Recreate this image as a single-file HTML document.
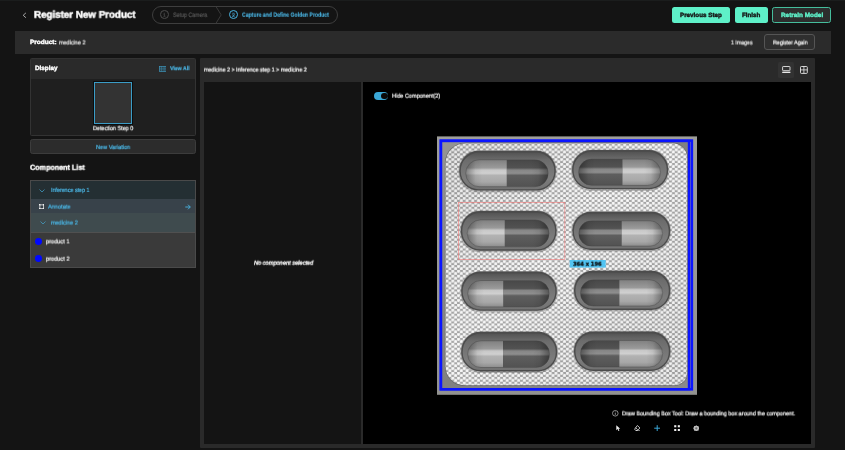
<!DOCTYPE html>
<html lang="en"><head><meta charset="utf-8"><title>Register New Product</title>
<style>
html,body{margin:0;padding:0;background:#141414;}
#app{position:relative;width:845px;height:450px;overflow:hidden;background:#141414;font-family:"Liberation Sans",sans-serif;}
#app div,#app svg,#app span{position:absolute;box-sizing:border-box;}
.t{white-space:nowrap;line-height:1;transform-origin:0 0;display:block;}
.t{text-rendering:geometricPrecision;will-change:transform;}
.t{-webkit-text-stroke:0.22px currentColor;}

</style></head>
<body>
<div id="app">
<!-- header -->
<div style="left:0;top:0;width:845px;height:1px;background:#1b1d1d;"></div>
<svg style="left:22px;top:12px" width="5" height="7" viewBox="0 0 5 7"><path d="M3.9 0.9 L1.2 3.3 L3.9 5.7" fill="none" stroke="#b8b8b8" stroke-width="0.9"/></svg>
<div style="left:152px;top:6px;width:186px;height:17.7px;border:1px solid #3e3e3e;border-radius:9px;"></div>
<svg style="left:214px;top:6px" width="10" height="18" viewBox="0 0 10 18"><path d="M2 0.6 L7.2 8.9 L2 17.2" fill="none" stroke="#3e3e3e" stroke-width="0.9"/></svg>
<div style="left:160.2px;top:10.3px;width:8.8px;height:8.8px;border:0.8px solid #4c4c4c;border-radius:50%;"></div>
<div style="left:229.1px;top:10.2px;width:9px;height:9px;border:0.9px solid #4ab4e2;border-radius:50%;"></div>
<div style="left:672.4px;top:7.3px;width:57.2px;height:15.4px;background:#5ef0c8;border-radius:2.5px;"></div>
<div style="left:734.6px;top:7.3px;width:33.3px;height:15.4px;background:#5ef0c8;border-radius:2.5px;"></div>
<div style="left:772.1px;top:7.2px;width:59px;height:15.6px;background:#2d2d2d;border:0.9px solid #45bd9c;border-radius:2.5px;"></div>
<!-- product bar -->
<div style="left:15px;top:31px;width:816px;height:23px;background:#2b2b2b;"></div>
<div style="left:764.4px;top:34.2px;width:50.8px;height:16.3px;background:#2f2f2f;border:1px solid #555;border-radius:3px;"></div>
<!-- display card -->
<div style="left:30.3px;top:58.2px;width:165.6px;height:77.7px;background:#1f1f1f;border:1px solid #333;border-radius:1.5px;"></div>
<div style="left:31.3px;top:59.2px;width:163.6px;height:19.6px;background:#2a2a2a;"></div>
<svg style="left:158.6px;top:66px" width="7.6" height="5.8" viewBox="0 0 7.6 5.8"><rect x="0.4" y="0.4" width="6.8" height="5" fill="#2f5f75" fill-opacity="0.45" stroke="#3f97bd" stroke-width="0.7"/><path d="M2.5 0.4V5.4M5.1 0.4V5.4M0.4 2.9H7.2" stroke="#3f97bd" stroke-width="0.5" opacity="0.8"/></svg>
<div style="left:92.7px;top:81px;width:40.6px;height:43.5px;background:#0c0c0c;"></div>
<div style="left:93.8px;top:82px;width:38.6px;height:41.7px;background:#333;border:1px solid #3b9cc6;"></div>
<div style="left:30.3px;top:139.3px;width:165.6px;height:15.2px;background:#2c2c2c;border:1px solid #3c3c3c;border-radius:2.5px;"></div>
<!-- component list -->
<div style="left:30.2px;top:180px;width:165.9px;height:87.8px;background:#3a3a3a;border:1px solid #4a4a4a;border-left-width:1.4px;"></div>
<div style="left:31.3px;top:181px;width:163.8px;height:17.8px;background:#242f33;"></div>
<div style="left:31.3px;top:198.8px;width:163.8px;height:14.4px;background:#38424a;"></div>
<div style="left:31.3px;top:213.2px;width:163.8px;height:19.7px;background:#3f4b4e;border-bottom:0.6px solid #505050;"></div>
<svg style="left:38.8px;top:188.6px" width="6" height="4" viewBox="0 0 6 4"><path d="M0.5 0.5 L3 3 L5.5 0.5" fill="none" stroke="#44a6d0" stroke-width="0.7"/></svg>
<svg style="left:39.6px;top:221.4px" width="6" height="4" viewBox="0 0 6 4"><path d="M0.5 0.5 L3 3 L5.5 0.5" fill="none" stroke="#44a6d0" stroke-width="0.7"/></svg>
<svg style="left:39px;top:203.7px" width="5.3" height="5.3" viewBox="0 0 6 6"><rect x="1" y="1" width="4" height="4" fill="none" stroke="#f0f0f0" stroke-width="0.8"/><rect x="0" y="0" width="1.6" height="1.6" fill="#f0f0f0"/><rect x="4.4" y="0" width="1.6" height="1.6" fill="#f0f0f0"/><rect x="0" y="4.4" width="1.6" height="1.6" fill="#f0f0f0"/><rect x="4.4" y="4.4" width="1.6" height="1.6" fill="#f0f0f0"/></svg>
<svg style="left:185px;top:203.6px" width="6" height="6" viewBox="0 0 6 6"><path d="M0.3 3H5.2M3 0.7L5.3 3L3 5.3" fill="none" stroke="#4ab4e2" stroke-width="0.9"/></svg>
<div style="left:35.4px;top:238.1px;width:6.9px;height:6.9px;border-radius:50%;background:#0008ff;"></div>
<div style="left:35.4px;top:255.2px;width:6.9px;height:6.9px;border-radius:50%;background:#0008ff;"></div>
<!-- right panel -->
<div style="left:200px;top:58px;width:615px;height:390px;background:#2a2a2a;border-radius:1px;"></div>
<div style="left:203.8px;top:81.7px;width:157.5px;height:362px;background:#141414;"></div>
<div style="left:363px;top:81.7px;width:448.2px;height:362.2px;background:#000;"></div>
<div style="left:778.1px;top:62px;width:15.9px;height:15.6px;background:#323232;border-radius:1.5px;"></div>
<svg style="left:782px;top:66.4px" width="9" height="7.4" viewBox="0 0 9 7.4"><rect x="0.6" y="0.5" width="7.4" height="4.2" rx="0.6" fill="none" stroke="#e8e8e8" stroke-width="0.9"/><rect x="0.2" y="5.7" width="8.2" height="1.3" fill="#e8e8e8"/></svg>
<svg style="left:799.8px;top:66.1px" width="8" height="8" viewBox="0 0 8 8"><rect x="0.5" y="0.5" width="6.8" height="6.9" rx="0.8" fill="none" stroke="#e8e8e8" stroke-width="0.9"/><path d="M3.9 0.5V7.4M0.5 3.9H7.3" stroke="#e8e8e8" stroke-width="0.8"/></svg>
<!-- toggle -->
<div style="left:373.8px;top:91.6px;width:14.6px;height:8.2px;border-radius:4.1px;background:#3aa7d6;"></div>
<div style="left:381.4px;top:92.6px;width:6.2px;height:6.2px;border-radius:50%;background:#0a0a0a;"></div>
<svg style="left:437px;top:136px" width="260" height="259" viewBox="437 136 260 259">
<defs>
<radialGradient id="dot"><stop offset="0" stop-color="#ffffff"/><stop offset="0.6" stop-color="#f0f0f0"/><stop offset="1" stop-color="#b6b6b6"/></radialGradient>
<pattern id="foil" x="445.6" y="143.6" width="5.73" height="4.86" patternUnits="userSpaceOnUse">
<rect width="5.73" height="4.86" fill="#a0a0a0"/><circle cx="1.43" cy="1.21" r="2.05" fill="url(#dot)"/><circle cx="4.3" cy="3.64" r="2.05" fill="url(#dot)"/></pattern>
<linearGradient id="cavg" x1="0" y1="0" x2="0" y2="1"><stop offset="0" stop-color="#545454"/><stop offset="0.2" stop-color="#6c6c6c"/><stop offset="0.7" stop-color="#7c7c7c"/><stop offset="1" stop-color="#727272"/></linearGradient>
<linearGradient id="capL" x1="0" y1="0" x2="0" y2="1"><stop offset="0" stop-color="#808080"/><stop offset="0.3" stop-color="#9a9a9a"/><stop offset="0.38" stop-color="#c8c8c8"/><stop offset="0.5" stop-color="#d0d0d0"/><stop offset="0.58" stop-color="#b2b2b2"/><stop offset="0.82" stop-color="#a8a8a8"/><stop offset="1" stop-color="#8c8c8c"/></linearGradient>
<linearGradient id="capD" x1="0" y1="0" x2="0" y2="1"><stop offset="0" stop-color="#484848"/><stop offset="0.3" stop-color="#525252"/><stop offset="0.38" stop-color="#868686"/><stop offset="0.5" stop-color="#8e8e8e"/><stop offset="0.58" stop-color="#5e5e5e"/><stop offset="1" stop-color="#525252"/></linearGradient>
<linearGradient id="ends" x1="0" y1="0" x2="1" y2="0"><stop offset="0" stop-color="#000" stop-opacity="0.38"/><stop offset="0.12" stop-color="#000" stop-opacity="0.06"/><stop offset="0.2" stop-color="#000" stop-opacity="0"/><stop offset="0.8" stop-color="#000" stop-opacity="0"/><stop offset="0.88" stop-color="#000" stop-opacity="0.06"/><stop offset="1" stop-color="#000" stop-opacity="0.38"/></linearGradient>
<linearGradient id="bgg" x1="0" y1="0" x2="1" y2="1"><stop offset="0" stop-color="#949494"/><stop offset="0.5" stop-color="#808080"/><stop offset="1" stop-color="#8a8a8a"/></linearGradient>
<linearGradient id="shade" x1="0" y1="0" x2="1" y2="1"><stop offset="0" stop-color="#000" stop-opacity="0.07"/><stop offset="0.45" stop-color="#fff" stop-opacity="0.06"/><stop offset="1" stop-color="#000" stop-opacity="0.04"/></linearGradient>
<linearGradient id="frm" x1="0" y1="0" x2="0" y2="1"><stop offset="0" stop-color="#9e9e9a"/><stop offset="1" stop-color="#929290"/></linearGradient>
</defs>
<rect x="437.0" y="136.4" width="260.0" height="258.4" fill="url(#frm)"/>
<rect x="441" y="141" width="248" height="248" fill="url(#bgg)"/>
<path d="M465.4 142.6 H672.2 A15.5 15.5 0 0 1 687.7 158.1 V372.9 A13.0 13.0 0 0 1 674.7 385.9 H464.4 A19.5 19.5 0 0 1 444.9 366.4 V163.1 A20.5 20.5 0 0 1 465.4 142.6 Z" fill="#5e5e5e" opacity="0.8"/>
<path d="M465.5 143.2 H672.2 A15.0 15.0 0 0 1 687.2 158.2 V372.7 A12.5 12.5 0 0 1 674.7 385.2 H464.5 A19.0 19.0 0 0 1 445.5 366.2 V163.2 A20.0 20.0 0 0 1 465.5 143.2 Z" fill="url(#foil)"/>
<path d="M465.5 143.2 H672.2 A15.0 15.0 0 0 1 687.2 158.2 V372.7 A12.5 12.5 0 0 1 674.7 385.2 H464.5 A19.0 19.0 0 0 1 445.5 366.2 V163.2 A20.0 20.0 0 0 1 465.5 143.2 Z" fill="url(#shade)"/>
<rect x="458.3" y="150.2" width="98.5" height="42.0" rx="20.3" fill="#6c6c6c" opacity="0.4"/>
<rect x="459.3" y="150.8" width="96.5" height="39.8" rx="19.3" fill="#4c4c4c"/>
<rect x="460.8" y="152.8" width="93.5" height="36.4" rx="17.7" fill="url(#cavg)"/>
<clipPath id="cp0"><rect x="465.7" y="159.8" width="82.5" height="26.9" rx="13.4"/></clipPath>
<g clip-path="url(#cp0)">
<rect x="465.7" y="159.8" width="41.1" height="26.9" fill="url(#capL)"/>
<rect x="506.8" y="159.8" width="41.4" height="26.9" fill="url(#capD)"/>
<rect x="465.7" y="159.8" width="82.5" height="26.9" fill="url(#ends)"/>
</g>
<rect x="465.7" y="159.8" width="82.5" height="26.9" rx="13.4" fill="none" stroke="#404040" stroke-width="0.8" opacity="0.5"/>
<rect x="459.8" y="210.3" width="97.8" height="42.0" rx="20.3" fill="#6c6c6c" opacity="0.4"/>
<rect x="460.8" y="210.9" width="95.8" height="39.8" rx="19.3" fill="#4c4c4c"/>
<rect x="462.3" y="212.9" width="92.8" height="36.4" rx="17.7" fill="url(#cavg)"/>
<clipPath id="cp1"><rect x="467.2" y="219.9" width="81.8" height="26.9" rx="13.4"/></clipPath>
<g clip-path="url(#cp1)">
<rect x="467.2" y="219.9" width="37.6" height="26.9" fill="url(#capL)"/>
<rect x="504.8" y="219.9" width="44.2" height="26.9" fill="url(#capD)"/>
<rect x="467.2" y="219.9" width="81.8" height="26.9" fill="url(#ends)"/>
</g>
<rect x="467.2" y="219.9" width="81.8" height="26.9" rx="13.4" fill="none" stroke="#404040" stroke-width="0.8" opacity="0.5"/>
<rect x="460.2" y="270.9" width="97.6" height="41.5" rx="20.1" fill="#6c6c6c" opacity="0.4"/>
<rect x="461.2" y="271.5" width="95.6" height="39.3" rx="19.1" fill="#4c4c4c"/>
<rect x="462.7" y="273.5" width="92.6" height="35.9" rx="17.5" fill="url(#cavg)"/>
<clipPath id="cp2"><rect x="467.6" y="280.5" width="81.6" height="26.4" rx="13.2"/></clipPath>
<g clip-path="url(#cp2)">
<rect x="467.6" y="280.5" width="35.7" height="26.4" fill="url(#capL)"/>
<rect x="503.3" y="280.5" width="45.9" height="26.4" fill="url(#capD)"/>
<rect x="467.6" y="280.5" width="81.6" height="26.4" fill="url(#ends)"/>
</g>
<rect x="467.6" y="280.5" width="81.6" height="26.4" rx="13.2" fill="none" stroke="#404040" stroke-width="0.8" opacity="0.5"/>
<rect x="460.2" y="331.2" width="98.0" height="41.8" rx="20.2" fill="#6c6c6c" opacity="0.4"/>
<rect x="461.2" y="331.8" width="96.0" height="39.6" rx="19.2" fill="#4c4c4c"/>
<rect x="462.7" y="333.8" width="93.0" height="36.2" rx="17.6" fill="url(#cavg)"/>
<clipPath id="cp3"><rect x="467.6" y="340.8" width="82.0" height="26.7" rx="13.3"/></clipPath>
<g clip-path="url(#cp3)">
<rect x="467.6" y="340.8" width="35.4" height="26.7" fill="url(#capL)"/>
<rect x="503.0" y="340.8" width="46.6" height="26.7" fill="url(#capD)"/>
<rect x="467.6" y="340.8" width="82.0" height="26.7" fill="url(#ends)"/>
</g>
<rect x="467.6" y="340.8" width="82.0" height="26.7" rx="13.3" fill="none" stroke="#404040" stroke-width="0.8" opacity="0.5"/>
<rect x="571.1" y="149.5" width="98.1" height="41.4" rx="20.0" fill="#6c6c6c" opacity="0.4"/>
<rect x="572.1" y="150.1" width="96.1" height="39.2" rx="19.0" fill="#4c4c4c"/>
<rect x="573.6" y="152.1" width="93.1" height="35.8" rx="17.4" fill="url(#cavg)"/>
<clipPath id="cp4"><rect x="578.5" y="159.1" width="82.1" height="26.3" rx="13.2"/></clipPath>
<g clip-path="url(#cp4)">
<rect x="578.5" y="159.1" width="44.1" height="26.3" fill="url(#capD)"/>
<rect x="622.6" y="159.1" width="38.0" height="26.3" fill="url(#capL)"/>
<rect x="578.5" y="159.1" width="82.1" height="26.3" fill="url(#ends)"/>
</g>
<rect x="578.5" y="159.1" width="82.1" height="26.3" rx="13.2" fill="none" stroke="#404040" stroke-width="0.8" opacity="0.5"/>
<rect x="571.4" y="211.2" width="99.8" height="40.4" rx="19.5" fill="#6c6c6c" opacity="0.4"/>
<rect x="572.4" y="211.8" width="97.8" height="38.2" rx="18.5" fill="#4c4c4c"/>
<rect x="573.9" y="213.8" width="94.8" height="34.8" rx="16.9" fill="url(#cavg)"/>
<clipPath id="cp5"><rect x="578.8" y="220.8" width="83.8" height="25.3" rx="12.6"/></clipPath>
<g clip-path="url(#cp5)">
<rect x="578.8" y="220.8" width="43.0" height="25.3" fill="url(#capD)"/>
<rect x="621.8" y="220.8" width="40.8" height="25.3" fill="url(#capL)"/>
<rect x="578.8" y="220.8" width="83.8" height="25.3" fill="url(#ends)"/>
</g>
<rect x="578.8" y="220.8" width="83.8" height="25.3" rx="12.6" fill="none" stroke="#404040" stroke-width="0.8" opacity="0.5"/>
<rect x="573.0" y="270.2" width="98.3" height="41.3" rx="20.0" fill="#6c6c6c" opacity="0.4"/>
<rect x="574.0" y="270.8" width="96.3" height="39.1" rx="19.0" fill="#4c4c4c"/>
<rect x="575.5" y="272.8" width="93.3" height="35.7" rx="17.4" fill="url(#cavg)"/>
<clipPath id="cp6"><rect x="580.4" y="279.8" width="82.3" height="26.2" rx="13.1"/></clipPath>
<g clip-path="url(#cp6)">
<rect x="580.4" y="279.8" width="39.1" height="26.2" fill="url(#capD)"/>
<rect x="619.5" y="279.8" width="43.2" height="26.2" fill="url(#capL)"/>
<rect x="580.4" y="279.8" width="82.3" height="26.2" fill="url(#ends)"/>
</g>
<rect x="580.4" y="279.8" width="82.3" height="26.2" rx="13.1" fill="none" stroke="#404040" stroke-width="0.8" opacity="0.5"/>
<rect x="573.0" y="330.8" width="98.3" height="41.7" rx="20.2" fill="#6c6c6c" opacity="0.4"/>
<rect x="574.0" y="331.4" width="96.3" height="39.5" rx="19.2" fill="#4c4c4c"/>
<rect x="575.5" y="333.4" width="93.3" height="36.1" rx="17.6" fill="url(#cavg)"/>
<clipPath id="cp7"><rect x="580.4" y="340.4" width="82.3" height="26.6" rx="13.3"/></clipPath>
<g clip-path="url(#cp7)">
<rect x="580.4" y="340.4" width="39.1" height="26.6" fill="url(#capD)"/>
<rect x="619.5" y="340.4" width="43.2" height="26.6" fill="url(#capL)"/>
<rect x="580.4" y="340.4" width="82.3" height="26.6" fill="url(#ends)"/>
</g>
<rect x="580.4" y="340.4" width="82.3" height="26.6" rx="13.3" fill="none" stroke="#404040" stroke-width="0.8" opacity="0.5"/>
<rect x="440.75" y="140.6" width="251.1" height="248.7" fill="none" stroke="#0a14ff" stroke-width="2.6"/>
<rect x="441.0" y="141.0" width="248.0" height="248.2" fill="none" stroke="#0a14ff" stroke-width="2.4"/>
<rect x="458.4" y="202.5" width="106.4" height="57" fill="none" stroke="#f47878" stroke-width="0.75" opacity="0.8"/>
<rect x="569.7" y="260" width="36" height="7.6" fill="#52c4f2"/>
</svg>
<!-- bottom tools -->
<svg style="left:612.4px;top:410.2px" width="6.6" height="6.6" viewBox="0 0 6.6 6.6"><circle cx="3.3" cy="3.3" r="2.8" fill="none" stroke="#e0e0e0" stroke-width="0.6"/><path d="M3.3 2.9V4.9" stroke="#e0e0e0" stroke-width="0.6"/><circle cx="3.3" cy="1.9" r="0.38" fill="#e0e0e0"/></svg>
<svg style="left:615.6px;top:425px" width="5" height="6.4" viewBox="0 0 5 6.4"><path d="M0.3 0.2 L0.3 5.2 L1.6 4.1 L2.5 6.1 L3.4 5.7 L2.5 3.8 L4.2 3.7 Z" fill="#f0f0f0"/></svg>
<svg style="left:634.4px;top:424.8px" width="6.4" height="6.4" viewBox="0 0 6.4 6.4"><path d="M3.4 0.5 L5.9 3 L3.4 5.5 L1.8 5.5 L0.6 4.2 Z M1.6 2.7 L3.7 4.8 M1.8 5.9 H6" fill="none" stroke="#f0f0f0" stroke-width="0.8"/></svg>
<svg style="left:653.9px;top:424.8px" width="6.4" height="6.4" viewBox="0 0 6.4 6.4"><path d="M3.2 0.2V6.2M0.2 3.2H6.2" stroke="#3aa7d6" stroke-width="1"/></svg>
<svg style="left:673.8px;top:424.9px" width="6.2" height="6.4" viewBox="0 0 6.2 6.4"><rect x="0.2" y="0.2" width="2.1" height="2.1" fill="#f0f0f0"/><rect x="3.8" y="0.2" width="2.1" height="2.1" fill="#f0f0f0"/><rect x="0.2" y="4" width="2.1" height="2.1" fill="#f0f0f0"/><rect x="3.8" y="4" width="2.1" height="2.1" fill="#f0f0f0"/></svg>
<svg style="left:692.8px;top:424.8px" width="6.6" height="6.6" viewBox="0 0 6.6 6.6"><path d="M3.3 0.2 L4.2 0.9 L5.4 0.9 L5.7 2 L6.4 3.3 L5.7 4.6 L5.4 5.7 L4.2 5.7 L3.3 6.4 L2.4 5.7 L1.2 5.7 L0.9 4.6 L0.2 3.3 L0.9 2 L1.2 0.9 L2.4 0.9 Z" fill="#bdbdbd"/><circle cx="3.3" cy="3.3" r="1.15" fill="#6a6a6a"/></svg>

<!-- text labels -->
<span class="t" id="t0" style="left:34.20px;top:10.0px;font-size:10.00px;font-weight:700;color:#ffffff;-webkit-text-stroke:0.5px currentColor;transform:translateY(0.80px) scaleX(0.9777)">Register New Product</span>
<span class="t" id="t1" style="left:173.40px;top:12.0px;font-size:6.30px;font-weight:400;color:#545454;transform:translateY(0.90px) scaleX(0.8446)">Setup Camera</span>
<span class="t" id="t2" style="left:241.90px;top:12.0px;font-size:6.50px;font-weight:700;color:#4ab4e2;-webkit-text-stroke:0.12px currentColor;transform:translateY(0.80px) scaleX(0.7880)">Capture and Define Golden Product</span>
<span class="t" id="t3" style="left:680.30px;top:13.0px;font-size:6.10px;font-weight:700;color:#151515;-webkit-text-stroke:0.38px currentColor;transform:translateY(0.00px) scaleX(1.0285)">Previous Step</span>
<span class="t" id="t4" style="left:742.10px;top:13.0px;font-size:6.10px;font-weight:700;color:#151515;-webkit-text-stroke:0.38px currentColor;transform:translateY(0.00px) scaleX(1.0193)">Finish</span>
<span class="t" id="t5" style="left:780.70px;top:13.0px;font-size:6.10px;font-weight:700;color:#5ef0c8;-webkit-text-stroke:0.38px currentColor;transform:translateY(0.00px) scaleX(1.0472)">Retrain Model</span>
<span class="t" id="t6" style="left:30.00px;top:40.0px;font-size:6.10px;font-weight:700;color:#ffffff;-webkit-text-stroke:0.38px currentColor;transform:translateY(0.40px) scaleX(1.0653)">Product:</span>
<span class="t" id="t7" style="left:59.00px;top:40.0px;font-size:6.00px;font-weight:400;color:#e4e4e4;transform:translateY(0.50px) scaleX(0.9099)">medicine 2</span>
<span class="t" id="t8" style="left:731.20px;top:40.0px;font-size:6.00px;font-weight:400;color:#e4e4e4;transform:translateY(0.50px) scaleX(0.8709)">1 Images</span>
<span class="t" id="t9" style="left:772.70px;top:40.0px;font-size:6.00px;font-weight:400;color:#f0f0f0;transform:translateY(0.50px) scaleX(0.8865)">Register Again</span>
<span class="t" id="t10" style="left:35.00px;top:66.0px;font-size:6.10px;font-weight:700;color:#ffffff;-webkit-text-stroke:0.38px currentColor;transform:translateY(0.30px) scaleX(1.0329)">Display</span>
<span class="t" id="t11" style="left:170.00px;top:67.0px;font-size:5.80px;font-weight:700;color:#4ab4e2;transform:translateY(0.20px) scaleX(0.8895)">View All</span>
<span class="t" id="t12" style="left:93.00px;top:126.0px;font-size:6.00px;font-weight:400;color:#f0f0f0;transform:translateY(0.20px) scaleX(0.9082)">Detection Step 0</span>
<span class="t" id="t13" style="left:95.90px;top:145.0px;font-size:6.00px;font-weight:400;color:#4ab4e2;transform:translateY(0.10px) scaleX(0.9267)">New Variation</span>
<span class="t" id="t14" style="left:30.30px;top:163.0px;font-size:7.40px;font-weight:700;color:#ffffff;-webkit-text-stroke:0.38px currentColor;transform:translateY(0.80px) scaleX(0.9724)">Component List</span>
<span class="t" id="t15" style="left:50.60px;top:188.0px;font-size:6.00px;font-weight:400;color:#4ab4e2;transform:translateY(0.00px) scaleX(0.8924)">Inference step 1</span>
<span class="t" id="t16" style="left:48.30px;top:204.0px;font-size:6.00px;font-weight:400;color:#4ab4e2;transform:translateY(0.60px) scaleX(0.9321)">Annotate</span>
<span class="t" id="t17" style="left:51.00px;top:220.0px;font-size:6.00px;font-weight:400;color:#4ab4e2;transform:translateY(0.60px) scaleX(0.9202)">medicine 2</span>
<span class="t" id="t18" style="left:46.00px;top:239.0px;font-size:6.00px;font-weight:400;color:#f0f0f0;transform:translateY(0.40px) scaleX(0.9388)">product 1</span>
<span class="t" id="t19" style="left:46.00px;top:256.0px;font-size:6.00px;font-weight:400;color:#f0f0f0;transform:translateY(0.70px) scaleX(0.9388)">product 2</span>
<span class="t" id="t20" style="left:203.80px;top:67.0px;font-size:6.00px;font-weight:400;color:#f4f4f4;transform:translateY(0.60px) scaleX(0.8950)">medicine 2 &gt; Inference step 1 &gt; medicine 2</span>
<span class="t" id="t21" style="left:391.80px;top:93.0px;font-size:6.00px;font-weight:400;color:#f4f4f4;transform:translateY(0.70px) scaleX(0.9225)">Hide Component(2)</span>
<span class="t" id="t22" style="left:253.80px;top:260.0px;font-size:6.00px;font-weight:400;color:#f8f8f8;font-style:italic;-webkit-text-stroke:0.34px currentColor;transform:translateY(0.70px) scaleX(0.9390)">No component selected</span>
<span class="t" id="t23" style="left:573.40px;top:262.0px;font-size:5.50px;font-weight:700;color:#0a0a0a;font-family:'DejaVu Sans', 'Liberation Sans', sans-serif;-webkit-text-stroke:0.3px currentColor;transform:translateY(0.70px) scaleX(0.9425)">364 x 196</span>
<span class="t" id="t24" style="left:621.80px;top:411.0px;font-size:6.00px;font-weight:400;color:#f4f4f4;transform:translateY(0.40px) scaleX(0.9163)">Draw Bounding Box Tool: Draw a bounding box around the component.</span>
<span class="t" id="t25" style="left:163.30px;top:13.0px;font-size:5.20px;font-weight:400;color:#4e4e4e;transform:translateY(0.70px) scaleX(0.8995)">1</span>
<span class="t" id="t26" style="left:232.20px;top:13.0px;font-size:5.20px;font-weight:400;color:#4ab4e2;transform:translateY(0.70px) scaleX(0.9686)">2</span>
</div>
</body></html>
